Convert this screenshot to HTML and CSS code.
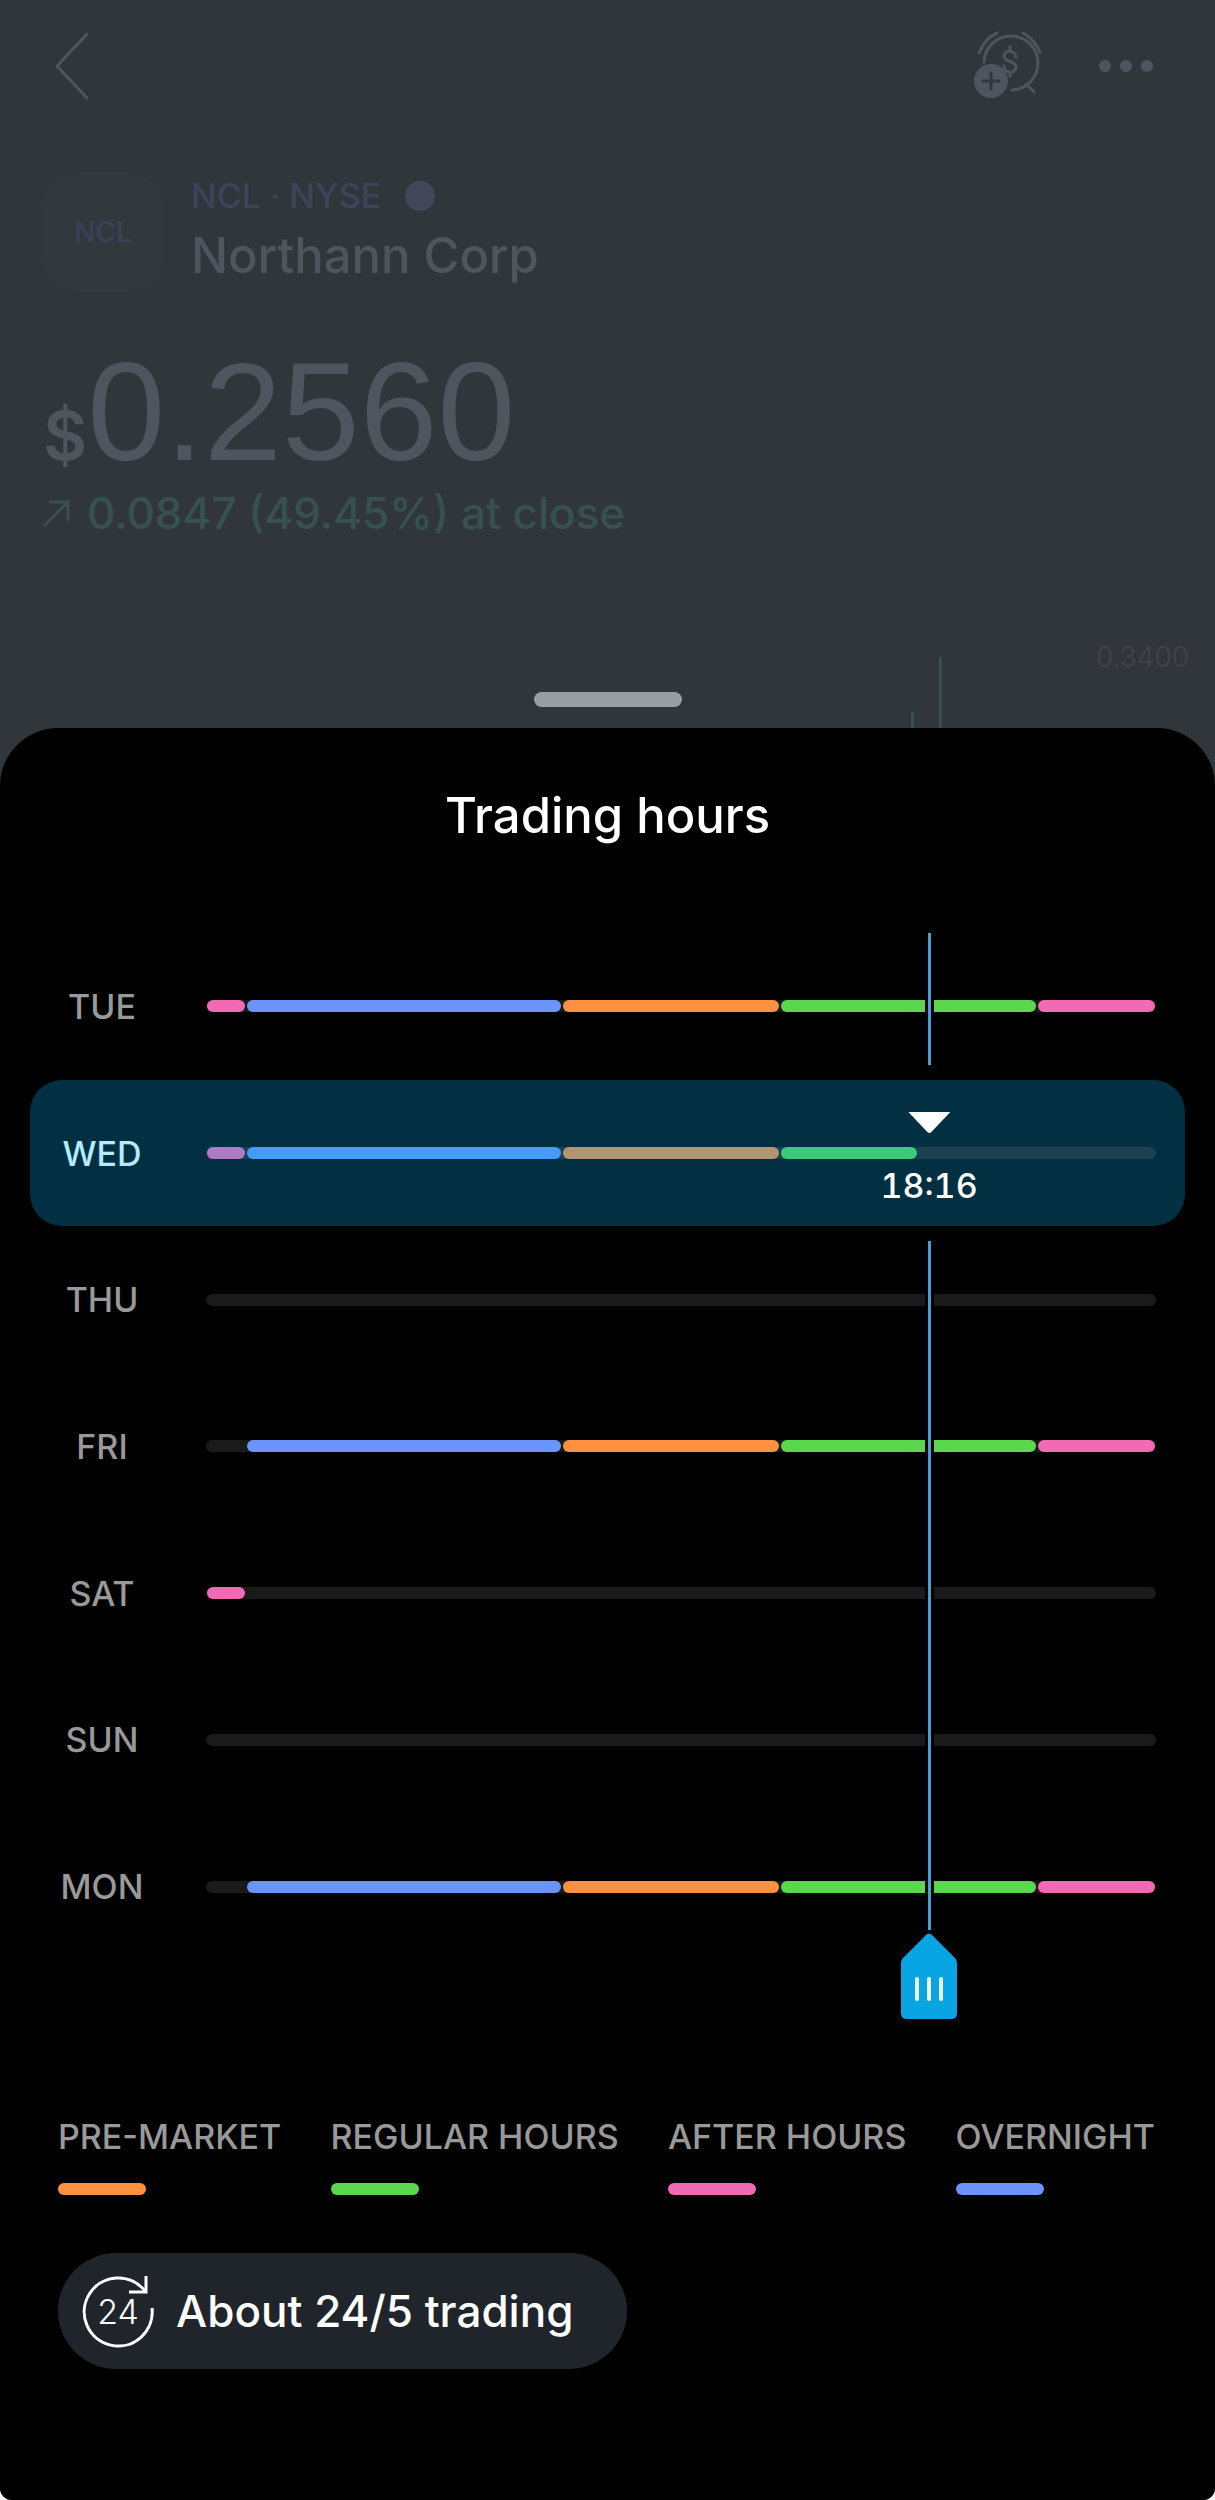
FILE: index.html
```
<!DOCTYPE html>
<html lang="en">
<head>
    <meta charset="UTF-8">
    <meta name="viewport" content="width=device-width, initial-scale=1.0">
    <title>Trading hours</title>
    <link rel="stylesheet" href="styles.css">
</head>
<body>
    <div class="screen">
        <main class="stock">
            <header class="topbar">
                <button class="icon-button" aria-label="Back">
                    <svg width="36" height="68" viewBox="0 0 36 68" fill="none" stroke="currentColor" stroke-width="3" stroke-linecap="round" stroke-linejoin="round">
                        <path d="M33 2 L3 34 L33 66"/>
                    </svg>
                </button>
                <div class="topbar-actions">
                    <button class="icon-button" aria-label="Add price alert">
                        <svg width="70" height="70" viewBox="0 0 70 70" fill="none" stroke="currentColor" stroke-width="3" stroke-linecap="round">
                            <path d="M11 31 A27 27 0 1 1 39 59"/>
                            <path d="M6 22 C10 12 17 5 24 2"/>
                            <path d="M50 2 C57 6 63 12 67 21"/>
                            <path d="M53 53 L61 61"/>
                            <path d="M43 26 C42 18 31 19 31 25 C31 32 43 29 43 36 C43 43 31 43 31 35 M37 16 V20 M37 41 V45"/>
                            <circle cx="18" cy="50" r="17" fill="currentColor" stroke="none"/>
                            <path d="M10 50 H26 M18 42 V58" class="alert-plus"/>
                        </svg>
                    </button>
                    <button class="icon-button" aria-label="More">
                        <svg width="54" height="12" viewBox="0 0 54 12" fill="currentColor">
                            <circle cx="6" cy="6" r="6"/>
                            <circle cx="27" cy="6" r="6"/>
                            <circle cx="48" cy="6" r="6"/>
                        </svg>
                    </button>
                </div>
            </header>

            <div class="company">
                <div class="company-logo">NCL</div>
                <div>
                    <div class="ticker">NCL · NYSE <span class="ticker-dot"></span></div>
                    <h1 class="company-name">Northann Corp</h1>
                </div>
            </div>

            <div class="price"><span class="currency">$</span>0.2560</div>
            <div class="change">
                <svg width="28" height="28" viewBox="0 0 28 28" fill="none" stroke="currentColor" stroke-width="3">
                    <path d="M1 27 L25 3 M6 3 H25 V22"/>
                </svg>
                0.0847 (49.45%) at close
            </div>

            <div class="preview">
                <svg class="preview-chart" width="100%" height="88" stroke="currentColor" stroke-width="3">
                    <line x1="75.1%" y1="72" x2="75.1%" y2="88"/>
                    <line x1="77.4%" y1="17" x2="77.4%" y2="88"/>
                </svg>
                <span class="preview-price">0.3400</span>
                <span class="grabber"></span>
            </div>
        </main>

        <section class="sheet">
            <h2 class="sheet-title">Trading hours</h2>

            <div class="week">
                <div class="day">
                    <span class="day-name">TUE</span>
                    <div class="track full">
                        <i class="after"></i><i class="overnight"></i><i class="pre"></i><i class="regular"></i><i class="after"></i>
                    </div>
                </div>
                <div class="day today">
                    <span class="day-name">WED</span>
                    <div class="track partial">
                        <i class="after"></i><i class="overnight"></i><i class="pre"></i><i class="regular"></i>
                    </div>
                    <div class="time-scale">
                        <div class="now">
                            <svg width="42" height="21" viewBox="0 0 42 21" fill="currentColor"><path d="M0 0 H42 L23 20 Q21 22 19 20 Z"/></svg>
                            <output for="time">18:16</output>
                        </div>
                    </div>
                </div>
                <div class="day">
                    <span class="day-name">THU</span>
                    <div class="track"></div>
                </div>
                <div class="day">
                    <span class="day-name">FRI</span>
                    <div class="track full">
                        <i></i><i class="overnight"></i><i class="pre"></i><i class="regular"></i><i class="after"></i>
                    </div>
                </div>
                <div class="day">
                    <span class="day-name">SAT</span>
                    <div class="track full">
                        <i class="after"></i>
                    </div>
                </div>
                <div class="day">
                    <span class="day-name">SUN</span>
                    <div class="track"></div>
                </div>
                <div class="day">
                    <span class="day-name">MON</span>
                    <div class="track full">
                        <i></i><i class="overnight"></i><i class="pre"></i><i class="regular"></i><i class="after"></i>
                    </div>
                </div>

                <div class="cursor">
                    <span class="cursor-line above"></span>
                    <span class="cursor-line below"></span>
                </div>
                <input class="time-slider" id="time" type="range" min="0" max="1440" value="1096" aria-label="Time of day">
            </div>

            <ul class="legend">
                <li>PRE-MARKET<i class="pre"></i></li>
                <li>REGULAR HOURS<i class="regular"></i></li>
                <li>AFTER HOURS<i class="after"></i></li>
                <li>OVERNIGHT<i class="overnight"></i></li>
            </ul>

            <button class="about">
                <svg width="74" height="74" viewBox="0 0 74 74" fill="none" stroke="currentColor" stroke-width="3">
                    <path d="M70 34 A34 34 0 1 1 63 17"/>
                    <path d="M64 2 V18 H47"/>
                    <text class="about-number" x="36" y="50" text-anchor="middle">24</text>
                </svg>
                About 24/5 trading
            </button>
        </section>
    </div>

    <script>
        const slider = document.getElementById('time');
        const week = document.querySelector('.week');
        const output = document.querySelector('.now output');

        function updateTime() {
            const hours = String(Math.floor(slider.value / 60)).padStart(2, '0');
            const minutes = String(slider.value % 60).padStart(2, '0');
            output.textContent = hours + ':' + minutes;
            week.style.setProperty('--time', slider.value / 1440 * 100 + '%');
        }

        slider.addEventListener('input', updateTime);
        updateTime();
    </script>
</body>
</html>
```
FILE: styles.css
```
* {
    box-sizing: border-box;
}

body {
    margin: 0;
    background: #fff;
    color: #fff;
    font-family: Inter, "Liberation Sans", sans-serif;
    font-weight: 500;
}

button {
    border: none;
    background: none;
    padding: 0;
    color: inherit;
    font: inherit;
    cursor: pointer;
}

svg {
    display: block;
    flex: none;
}

.screen {
    display: flex;
    flex-direction: column;
    min-height: 100vh;
    background: #31363b;
    border-radius: 0 0 12px 12px;
    overflow: hidden;
}

/* Dimmed stock page behind the sheet */
.stock {
    color: #50545e;
}

.topbar {
    display: flex;
    align-items: center;
    justify-content: space-between;
    height: 132px;
    padding: 0 62px 0 54px;
}

.topbar-actions {
    display: flex;
    align-items: center;
    gap: 56px;
}

.alert-plus {
    stroke: #31363b;
}

.company {
    display: flex;
    align-items: center;
    gap: 28px;
    padding: 40px 43px 0;
}

.company-logo {
    display: flex;
    align-items: center;
    justify-content: center;
    width: 120px;
    height: 120px;
    border-radius: 36px;
    background: #33383d;
    border: 2px solid #32374a55;
    color: #3c405a;
    font-size: 28px;
}

.ticker {
    display: flex;
    align-items: center;
    gap: 24px;
    color: #3f435a;
    font-size: 34px;
    line-height: 48px;
}

.ticker-dot {
    width: 30px;
    height: 30px;
    border-radius: 50%;
    background: #434759;
}

.company-name {
    margin: 0;
    font-size: 49px;
    font-weight: 500;
    line-height: 72px;
}

.price {
    display: flex;
    align-items: baseline;
    padding: 70px 43px 0;
    font-family: "Liberation Sans", sans-serif;
    font-size: 140px;
    font-weight: 400;
    line-height: 100px;
}

.currency {
    font-family: Inter, sans-serif;
    font-size: 68px;
    font-weight: 600;
}

.change {
    display: flex;
    align-items: center;
    gap: 16px;
    padding: 0 43px;
    color: #36514f;
    font-size: 44px;
    line-height: 56px;
}

.preview {
    position: relative;
    height: 88px;
    margin-top: 99px;
}

.preview-chart {
    position: absolute;
    inset: 0;
    color: #39504f;
}

.preview-price {
    display: block;
    padding-right: 26px;
    color: #42434f;
    font-size: 28px;
    font-weight: 300;
    line-height: 34px;
    text-align: right;
}

.grabber {
    position: absolute;
    left: 50%;
    bottom: 21px;
    width: 148px;
    height: 15px;
    margin-left: -74px;
    border-radius: 8px;
    background: #989ca5;
}

/* Sheet */
.sheet {
    flex: 1;
    padding-bottom: 130px;
    border-radius: 58px 58px 0 0;
    background: #000;
}

.sheet-title {
    margin: 0;
    padding-top: 56px;
    font-size: 49px;
    font-weight: 500;
    line-height: 64px;
    text-align: center;
}

.pre {
    background: #ff9140;
}

.regular {
    background: #5ad74c;
}

.after {
    background: #f26ab4;
}

.overnight {
    background: #6a94fa;
}

.week {
    position: relative;
    display: grid;
    grid-template-rows: repeat(7, 1fr);
    height: 1027px;
    margin: 85px 30px 0;
}

.day {
    position: relative;
    display: flex;
    align-items: center;
    padding-right: 29px;
    border-radius: 32px;
    color: #999;
}

.day-name {
    width: 144px;
    margin-right: 32px;
    font-size: 34px;
    text-align: center;
}

.track {
    display: grid;
    flex: 1;
    height: 12px;
    border-radius: 6px;
    background: #1a1a1a;
}

/* columns are half hours */
.full {
    grid-template-columns: 2fr 16fr 11fr 13fr 6fr;
}

.partial {
    grid-template-columns: 2fr 16fr 11fr 7fr 12fr;
}

.track i {
    margin: 0 1px;
    border-radius: 6px;
}

.today {
    background: #023042;
    color: #b5ebff;
}

.today .track {
    background: #1a4051;
}

.today .after {
    background: #b07ac2;
}

.today .overnight {
    background: #449bf8;
}

.today .pre {
    background: #b3956f;
}

.today .regular {
    background: #3bc97c;
}

.time-scale,
.cursor {
    position: absolute;
    top: 0;
    bottom: 0;
    left: 176px;
    right: 29px;
    pointer-events: none;
}

.now {
    position: absolute;
    top: 32px;
    left: var(--time);
    display: flex;
    flex-direction: column;
    align-items: center;
    gap: 32px;
    transform: translateX(-50%);
    color: #fff;
    font-size: 34px;
    font-variant-numeric: tabular-nums;
    line-height: 42px;
}

.cursor-line {
    position: absolute;
    left: var(--time);
    width: 9px;
    margin-left: -4px;
    border: solid #000;
    border-width: 0 3px;
    background: #4e9ccb;
}

.above {
    top: 0;
    height: 132px;
}

.below {
    top: 308px;
    bottom: 30px;
}

.time-slider {
    position: absolute;
    left: 148px;
    right: 1px;
    bottom: -59px;
    width: auto;
    height: 86px;
    margin: 0;
    background: none;
    appearance: none;
}

.time-slider::-webkit-slider-thumb {
    width: 56px;
    height: 86px;
    background: url("data:image/svg+xml,%3Csvg xmlns='http://www.w3.org/2000/svg' viewBox='0 0 56 86'%3E%3Cpath fill='%2309a5e2' d='M25 2Q28 -1 31 2L54 25Q56 27 56 30V80Q56 86 50 86H6Q0 86 0 80V30Q0 27 2 25Z'/%3E%3Cpath stroke='%23e8faff' stroke-width='4' stroke-linecap='round' d='M16 46V66M28 46V66M40 46V66'/%3E%3C/svg%3E") no-repeat;
    appearance: none;
    cursor: grab;
}

.legend {
    display: flex;
    flex-wrap: wrap;
    justify-content: space-between;
    margin: 0;
    padding: 156px 60px 0 58px;
    list-style: none;
    color: #999;
    font-size: 34px;
    line-height: 42px;
}

.legend i {
    display: block;
    width: 88px;
    height: 12px;
    margin-top: 25px;
    border-radius: 6px;
}

.about {
    display: flex;
    align-items: center;
    gap: 20px;
    height: 116px;
    margin: 58px 58px 0;
    padding: 0 54px 0 24px;
    border-radius: 58px;
    background: #20242b;
    font-size: 44px;
}

.about-number {
    fill: currentColor;
    stroke: none;
    font-size: 34px;
    font-weight: 300;
}
```
